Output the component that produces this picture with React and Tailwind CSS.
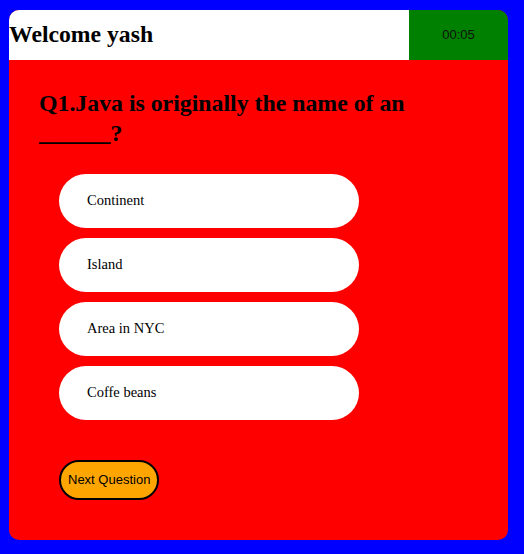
import React from "react"

const options = ["Continent", "Island", "Area in NYC", "Coffe beans"]

const App = () => {
  return (
    <div className="min-h-[554px] bg-[#0000ff] pt-[10px] pl-[9px]">
      <div className="w-[499px] h-[530px] bg-[#ff0000] rounded-[10px] overflow-hidden">
        {/* Header */}
        <div className="flex h-[50px]">
          <div className="flex-1 bg-white flex items-center">
            <h1 className="text-[23.7px] font-bold text-black font-['Liberation_Serif',serif]">
              Welcome yash
            </h1>
          </div>
          <div className="w-[99px] bg-[#008000] flex items-center justify-center">
            <span className="text-[13px] text-[#111] font-['Liberation_Sans',sans-serif]">00:05</span>
          </div>
        </div>

        <div className="px-[30px] pt-[28px]">
          <h2 className="text-[23.8px] leading-[30px] font-bold text-black font-['Liberation_Serif',serif] pr-[30px]">
            Q1.Java is originally the name of an ______?
          </h2>

          <div className="mt-[26px] pl-[20px] flex flex-col gap-[10px]">
            {options.map((opt) => (
              <button
                key={opt}
                className="w-[300px] h-[54px] bg-white rounded-full text-left pl-[28px] text-[14.5px] text-black font-['Liberation_Serif',serif]"
              >
                {opt}
              </button>
            ))}
          </div>

          <div className="pl-[20px] mt-[40px]">
            <button className="h-[40px] px-[7px] bg-[#ffa500] border-2 border-black rounded-full text-[13px] text-black font-['Liberation_Sans',sans-serif]">
              Next Question
            </button>
          </div>
        </div>
      </div>
    </div>
  )
}

export default App
